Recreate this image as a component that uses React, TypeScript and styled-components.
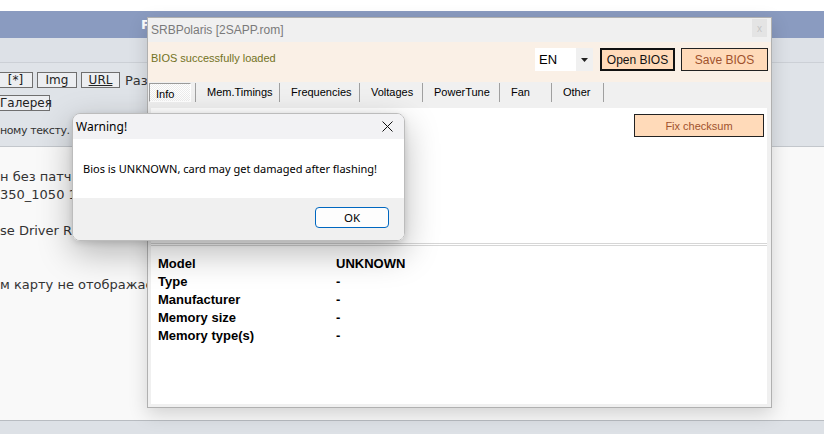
import React from "react";
import styled, { createGlobalStyle } from "styled-components";

const GlobalStyle = createGlobalStyle`
  *, *::before, *::after { box-sizing: border-box; }
  html, body { margin: 0; padding: 0; }
  body { width: 824px; height: 434px; overflow: hidden; background: #fff; }
`;

const tabs = [
  { label: "Mem.Timings", width: 84 },
  { label: "Frequencies", width: 80 },
  { label: "Voltages", width: 63 },
  { label: "PowerTune", width: 77 },
  { label: "Fan", width: 52 },
  { label: "Other", width: 53 },
];

const infoRows = [
  ["Model", "UNKNOWN"],
  ["Type", "-"],
  ["Manufacturer", "-"],
  ["Memory size", "-"],
  ["Memory type(s)", "-"],
];

function App() {
  return (
    <Page>
      <GlobalStyle />
      <TopGap />
      <HeaderBar>P</HeaderBar>
      <NavStrip />
      <Editor>
        <ToolRow>
          <ToolButton $width={35}>[*]</ToolButton>
          <ToolButton $width={40}>Img</ToolButton>
          <ToolButton $width={39} $underline>URL</ToolButton>
          <ToolLabel>Разм</ToolLabel>
        </ToolRow>
        <ToolRow $second>
          <ToolButton $width={51}>Галерея</ToolButton>
        </ToolRow>
        <Hint>ному тексту.</Hint>
      </Editor>
      <Post>
        <Line>н без патча</Line>
        <Line>350_1050 1</Line>
        <Line>&nbsp;</Line>
        <Line>se Driver R</Line>
        <Line>&nbsp;</Line>
        <Line>&nbsp;</Line>
        <Line>м карту не отображае</Line>
      </Post>
      <PageFooter />

      <AppWindow>
        <TitleBar>
          <span>SRBPolaris [2SAPP.rom]</span>
          <CloseBox>x</CloseBox>
        </TitleBar>
        <StatusBar>
          <StatusText>BIOS successfully loaded</StatusText>
          <LangSelect>
            <span>EN</span>
            <SelectArrow>
              <svg width="7" height="4" viewBox="0 0 7 4">
                <path d="M0 0h7L3.5 4z" fill="#222" />
              </svg>
            </SelectArrow>
          </LangSelect>
          <PeachButton $thick $width={75}>Open BIOS</PeachButton>
          <PeachButton $brown $width={87}>Save BIOS</PeachButton>
        </StatusBar>
        <TabStrip>
          <InfoTab>Info</InfoTab>
          {tabs.map((t, i) => (
            <Tab key={t.label} $width={t.width} $last={i === tabs.length - 1}>
              {t.label}
            </Tab>
          ))}
        </TabStrip>
        <Content>
          <TopPanel>
            <PeachButton $brown $small $width={130}>Fix checksum</PeachButton>
          </TopPanel>
          <BottomPanel>
            <InfoGrid>
              {infoRows.map(([k, v]) => (
                <React.Fragment key={k}>
                  <span>{k}</span>
                  <span>{v}</span>
                </React.Fragment>
              ))}
            </InfoGrid>
          </BottomPanel>
        </Content>
      </AppWindow>

      <Dialog>
        <DialogTitle>
          <span>Warning!</span>
          <svg width="11" height="11" viewBox="0 0 11 11">
            <path d="M0.5 0.5l10 10M10.5 0.5l-10 10" stroke="#111" strokeWidth="1" />
          </svg>
        </DialogTitle>
        <DialogBody>Bios is UNKNOWN, card may get damaged after flashing!</DialogBody>
        <DialogFooter>
          <OkButton>OK</OkButton>
        </DialogFooter>
      </Dialog>
    </Page>
  );
}

const Page = styled.div`
  position: relative;
  width: 824px;
  height: 434px;
  display: flex;
  flex-direction: column;
  overflow: hidden;
  font-family: "DejaVu Sans", Verdana, sans-serif;
  color: #333;
`;

const TopGap = styled.div`
  height: 11px;
  background: #fff;
`;

const HeaderBar = styled.div`
  height: 27px;
  background: #8a9bc0;
  color: #fff;
  font-size: 13px;
  font-weight: bold;
  display: flex;
  align-items: center;
  padding-left: 141px;
  white-space: nowrap;
`;

const NavStrip = styled.div`
  height: 25px;
  background: #dde1e7;
  border-bottom: 1px solid #ccd0d6;
`;

const Editor = styled.div`
  height: 84px;
  padding-top: 9px;
  background: #dfe3e8;
  border-bottom: 1px solid #c3c7cc;
  display: flex;
  flex-direction: column;
`;

const ToolRow = styled.div<{ $second?: boolean }>`
  display: flex;
  align-items: center;
  gap: 4px;
  margin-left: ${(p) => (p.$second ? "-1px" : "-2px")};
  margin-top: ${(p) => (p.$second ? "7px" : "0")};
  height: 16px;
`;

const ToolButton = styled.div<{ $underline?: boolean; $width: number }>`
  flex: none;
  width: ${(p) => p.$width}px;
  height: 16px;
  border: 1px solid #6f6f6f;
  background: #eceef1;
  color: #222;
  font-size: 12px;
  line-height: 14px;
  text-align: center;
  text-decoration: ${(p) => (p.$underline ? "underline" : "none")};
`;

const ToolLabel = styled.span`
  font-size: 13px;
  color: #333;
  white-space: nowrap;
  margin-left: 1px;
`;

const Hint = styled.div`
  margin-top: 12px;
  font-size: 11px;
  letter-spacing: -0.4px;
  line-height: 16px;
  color: #333;
  white-space: nowrap;
`;

const Post = styled.div`
  flex: 1;
  background: #f9f9f9;
  padding-top: 21px;
  font-size: 13px;
  line-height: 18px;
  color: #333;
`;

const Line = styled.div`
  white-space: nowrap;
`;

const PageFooter = styled.div`
  height: 14px;
  background: #dde1e6;
  border-top: 1px solid #b8bcc1;
`;

const AppWindow = styled.div`
  position: absolute;
  left: 147px;
  top: 17px;
  width: 625px;
  height: 391px;
  background: #f0f0f0;
  border: 1px solid #b0b0b0;
  box-shadow: 0 6px 18px rgba(0, 0, 0, 0.16);
  display: flex;
  flex-direction: column;
  font-family: "Liberation Sans", Arial, sans-serif;
  color: #000;
`;

const TitleBar = styled.div`
  height: 24px;
  display: flex;
  align-items: center;
  justify-content: space-between;
  padding: 0 4px 0 3px;
  font-size: 12px;
  color: #7a7a7a;
`;

const CloseBox = styled.div`
  align-self: flex-start;
  margin-top: 1px;
  width: 15px;
  height: 18px;
  background: #e4e4e4;
  color: #c4c4c4;
  font-size: 10px;
  display: flex;
  align-items: center;
  justify-content: center;
`;

const StatusBar = styled.div`
  height: 40px;
  background: #faf0e6;
  display: flex;
  align-items: flex-start;
  gap: 6px;
  padding: 6px 3px 0 3px;
`;

const StatusText = styled.div`
  flex: 1;
  line-height: 20px;
  font-size: 11px;
  color: #727224;
`;

const LangSelect = styled.div`
  width: 58px;
  height: 23px;
  background: #fff;
  display: flex;
  align-items: center;
  justify-content: space-between;
  padding-left: 4px;
  font-size: 13px;
  margin-right: 1px;
`;

const SelectArrow = styled.div`
  width: 17px;
  height: 100%;
  background: #f0f0f0;
  display: flex;
  align-items: center;
  justify-content: center;
`;

const PeachButton = styled.div<{
  $thick?: boolean;
  $brown?: boolean;
  $small?: boolean;
  $width: number;
}>`
  width: ${(p) => p.$width}px;
  height: 23px;
  background: #ffdab9;
  border: ${(p) => (p.$thick ? "2px solid #111" : "1px solid #222")};
  color: ${(p) => (p.$brown ? "#a0522d" : "#111")};
  font-size: ${(p) => (p.$small ? "11px" : "12px")};
  display: flex;
  align-items: center;
  justify-content: center;
`;

const TabStrip = styled.div`
  height: 26px;
  display: flex;
  align-items: flex-start;
  padding: 1px 0 0 1px;
  font-size: 11px;
`;

const InfoTab = styled.div`
  width: 42px;
  height: 19px;
  margin-right: 4px;
  padding: 4px 0 0 6px;
  border: 1px solid #fff;
  border-top-color: #9a9a9a;
  border-left-color: #9a9a9a;
  background: repeating-conic-gradient(#ffffff 0 25%, #ececec 0 50%) 0 0 / 2px 2px;
`;

const Tab = styled.div<{ $width: number; $last?: boolean }>`
  width: ${(p) => p.$width}px;
  height: 19px;
  padding: 3px 0 0 11px;
  border-left: 1px solid #a0a0a0;
  border-right: ${(p) => (p.$last ? "1px solid #a0a0a0" : "none")};
`;

const Content = styled.div`
  flex: 1;
  margin: 0 4px 3px 3px;
  background: #fff;
  display: flex;
  flex-direction: column;
`;

const TopPanel = styled.div`
  height: 136px;
  padding: 6px 3px 0 0;
  border-bottom: 1px solid #d6d6d6;
  display: flex;
  justify-content: flex-end;
  align-items: flex-start;
`;

const BottomPanel = styled.div`
  flex: 1;
  margin-top: 1px;
  border-top: 1px solid #d6d6d6;
  padding: 8px 0 0 7px;
`;

const InfoGrid = styled.div`
  display: grid;
  grid-template-columns: 178px auto;
  grid-auto-rows: 18px;
  align-items: center;
  font-size: 13px;
  font-weight: bold;
  color: #000;
`;

const Dialog = styled.div`
  position: absolute;
  left: 72px;
  top: 113px;
  width: 333px;
  height: 128px;
  border: 1px solid #bcbcbc;
  border-radius: 8px;
  overflow: hidden;
  box-shadow: 0 12px 34px rgba(0, 0, 0, 0.28), 0 2px 6px rgba(0, 0, 0, 0.12);
  display: flex;
  flex-direction: column;
  font-family: "Noto Sans", "Liberation Sans", sans-serif;
  font-size: 11px;
  color: #000;
`;

const DialogTitle = styled.div`
  height: 25px;
  background: #f2f2f4;
  display: flex;
  align-items: center;
  justify-content: space-between;
  padding: 0 11px 0 3px;
  font-size: 12px;
`;

const DialogBody = styled.div`
  height: 59px;
  background: #fff;
  display: flex;
  align-items: center;
  padding-left: 10px;
`;

const DialogFooter = styled.div`
  flex: 1;
  background: #f0f0f0;
  display: flex;
  justify-content: flex-end;
  align-items: flex-start;
  padding: 9px 15px 0 0;
`;

const OkButton = styled.div`
  width: 74px;
  height: 21px;
  background: #fdfdfd;
  border: 1px solid #0067c0;
  border-radius: 4px;
  display: flex;
  align-items: center;
  justify-content: center;
  font-size: 11.5px;
`;

export default App;
